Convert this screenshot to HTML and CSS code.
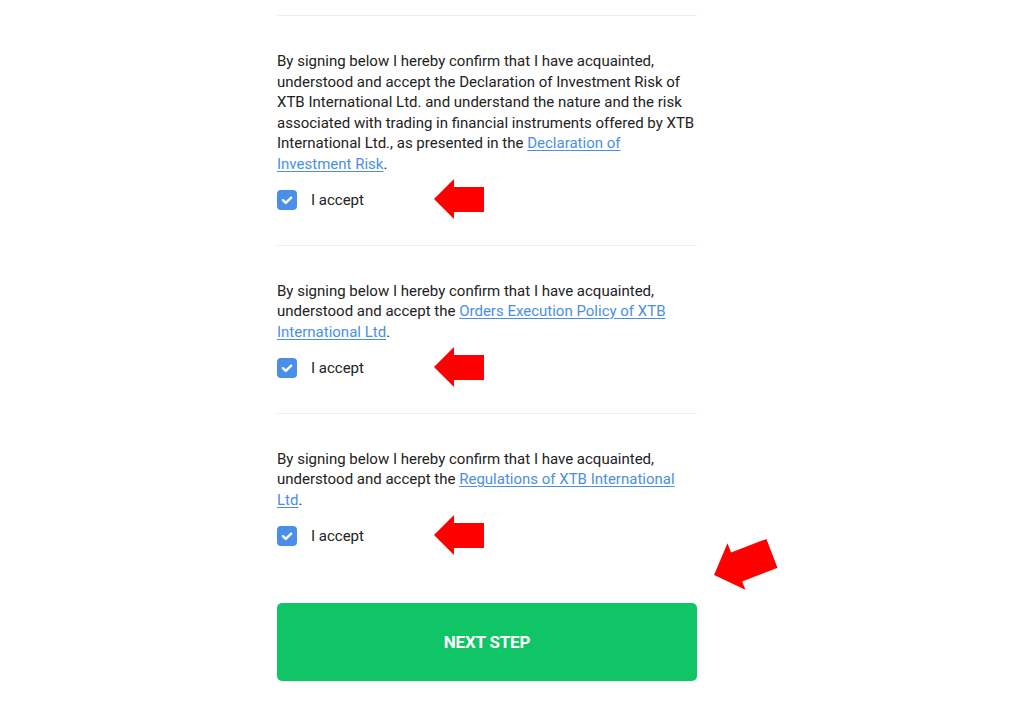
FILE: index.html
```html
<!DOCTYPE html>
<html lang="en">
<head>
<meta charset="utf-8">
<title>Declarations</title>
<link rel="stylesheet" href="styles.css">
</head>
<body>
<main class="form">
  <section class="decl">
    <p class="decl-text">By signing below I hereby confirm that I have acquainted, understood and accept the Declaration of Investment Risk of XTB International Ltd. and understand the nature and the risk associated with trading in financial instruments offered by XTB International Ltd., as presented in the <a href="#">Declaration of Investment Risk</a>.</p>
    <label class="check-row">
      <span class="box"><svg viewBox="0 0 20 20" width="20" height="20"><path d="M6 10.2l2.8 2.7L14.2 7.6" fill="none" stroke="#fff" stroke-width="2.4" stroke-linecap="round" stroke-linejoin="round"/></svg></span>
      <span class="label">I accept</span>
      <svg class="arrow" viewBox="0 0 50 42" width="50" height="42"><polygon points="0,21 20,1 20,9 50,9 50,34 20,34 20,41" fill="#ff0000"/></svg>
    </label>
  </section>
  <section class="decl">
    <p class="decl-text">By signing below I hereby confirm that I have acquainted, understood and accept the <a href="#">Orders Execution Policy of XTB International Ltd</a>.</p>
    <label class="check-row">
      <span class="box"><svg viewBox="0 0 20 20" width="20" height="20"><path d="M6 10.2l2.8 2.7L14.2 7.6" fill="none" stroke="#fff" stroke-width="2.4" stroke-linecap="round" stroke-linejoin="round"/></svg></span>
      <span class="label">I accept</span>
      <svg class="arrow" viewBox="0 0 50 42" width="50" height="42"><polygon points="0,21 20,1 20,9 50,9 50,34 20,34 20,41" fill="#ff0000"/></svg>
    </label>
  </section>
  <section class="decl">
    <p class="decl-text">By signing below I hereby confirm that I have acquainted, understood and accept the <a href="#">Regulations of XTB International Ltd</a>.</p>
    <label class="check-row">
      <span class="box"><svg viewBox="0 0 20 20" width="20" height="20"><path d="M6 10.2l2.8 2.7L14.2 7.6" fill="none" stroke="#fff" stroke-width="2.4" stroke-linecap="round" stroke-linejoin="round"/></svg></span>
      <span class="label">I accept</span>
      <svg class="arrow" viewBox="0 0 50 42" width="50" height="42"><polygon points="0,21 20,1 20,9 50,9 50,34 20,34 20,41" fill="#ff0000"/></svg>
    </label>
  </section>
  <div class="actions">
    <svg class="arrow-diag" viewBox="0 0 62 52" width="62" height="52"><polygon points="0,26 24,1 24,11 62,11 62,42 24,42 24,51" fill="#ff0000"/></svg>
    <button class="next" type="button">NEXT STEP</button>
  </div>
</main>
</body>
</html>
```

FILE: styles.css
```css
html, body {
  margin: 0;
  padding: 0;
  background: #ffffff;
}

body {
  font-family: "Roboto", "Liberation Sans", sans-serif;
  color: #222222;
}

.form {
  width: 420px;
  margin-left: 277px;
  padding-top: 15px;
}

.decl {
  border-top: 1px solid #eeeeee;
  padding: 35px 0 34.5px;
}

.decl-text {
  margin: 0;
  font-size: 15px;
  line-height: 20.5px;
}

.decl-text a {
  color: #4a90e2;
  text-decoration: underline;
  text-underline-offset: 2px;
}

.check-row {
  position: relative;
  display: flex;
  align-items: center;
  gap: 14px;
  height: 20px;
  margin-top: 16px;
}

.box {
  width: 20px;
  height: 20px;
  border-radius: 4px;
  background: #4a8fe8;
  display: flex;
}

.label {
  font-size: 15px;
}

.arrow {
  position: absolute;
  left: 157px;
  top: -12px;
}

.actions {
  position: relative;
  padding-top: 22px;
}

.arrow-diag {
  position: absolute;
  left: 435px;
  top: -43px;
  transform: rotate(-21deg);
}

.next {
  display: block;
  width: 420px;
  height: 78px;
  border: none;
  border-radius: 5px;
  background: #0fc566;
  color: #ffffff;
  font-family: "Roboto", "Liberation Sans", sans-serif;
  font-weight: 700;
  font-size: 17px;
  letter-spacing: -0.2px;
  cursor: pointer;
}
```
